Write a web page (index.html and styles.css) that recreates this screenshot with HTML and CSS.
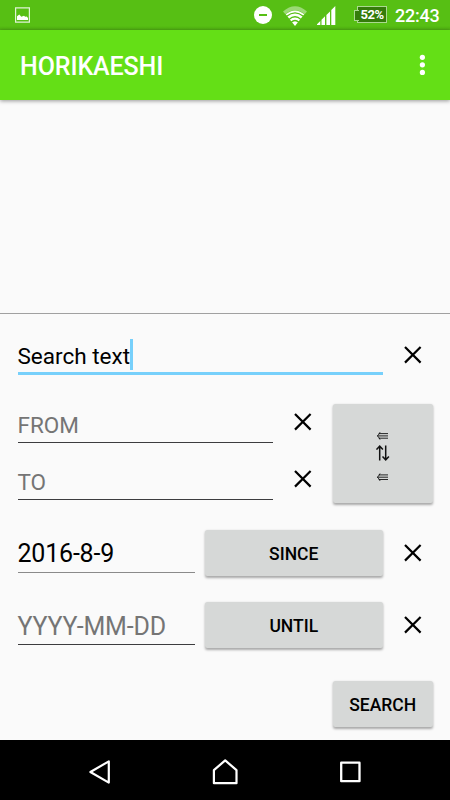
FILE: index.html
```html
<!DOCTYPE html>
<html lang="en">
<head>
<meta charset="utf-8">
<title>HORIKAESHI</title>
<link rel="stylesheet" href="styles.css">
</head>
<body>
<svg class="defs" width="0" height="0"><symbol id="clear" viewBox="0 0 18 18"><path d="M1 1 16.6 16.6M16.6 1 1 16.6" fill="none" stroke="#000" stroke-width="2.2"/></symbol></svg>
<header class="status">
  <svg class="picture" width="15" height="16" viewBox="0 0 15 16"><path d="M.6.8h13.8v14.4H.6z" fill="none" stroke="#e0f4d5" stroke-width="1.2"/><path d="M2 13V9.3L4.3 7.5l2 2.3L9 8.8l1.2.9 1.5-.3L13 11v2z" fill="#fff"/></svg>
  <svg class="dnd" width="18" height="18" viewBox="0 0 18 18"><circle cx="9" cy="9" r="9" fill="#fff"/><path d="M5 9h8" stroke="#57bf14" stroke-width="2"/></svg>
  <svg class="wifi" width="24" height="20" viewBox="0 0 24 20"><path d="M0 5.5Q12-5 24 5.5L21.7 8.3Q12 .2 2.3 8.3z" fill="#9bd975"/><path d="M2.7 8.2Q12 .6 21.3 8.2L12 20z" fill="#fff"/><path d="M3.7 10.3Q12 3.5 20.3 10.3M6 13.4Q12 8.2 18 13.4M8.1 16.2Q12 12.7 15.9 16.2" fill="none" stroke="#57bf14" stroke-width="1.3"/></svg>
  <svg class="signal" width="19" height="19" viewBox="0 0 19 19"><path d="M0 19v-.8L3.3 15v4zM4.5 19v-5.2L8 10.3V19zM9.4 19V9L13 5.4V19zM14.3 19V4.1L18.3 0v19z" fill="#fff"/></svg>
  <div class="battery">52%</div>
  <div class="clock">22:43</div>
</header>
<div class="appbar">
  <h1>HORIKAESHI</h1>
  <svg width="6" height="22" viewBox="0 0 6 22"><g fill="#fff"><circle cx="3.4" cy="3.3" r="2.6"/><circle cx="3.4" cy="10.8" r="2.6"/><circle cx="3.4" cy="18.4" r="2.6"/></g></svg>
</div>
<main class="results"></main>
<section class="form">
  <div class="row query">
    <div class="field focused"><span>Search text</span><i class="caret"></i></div>
    <svg class="x"><use href="#clear"/></svg>
  </div>
  <div class="row langs">
    <div class="lines">
      <div class="row from"><div class="field hint">FROM</div><svg class="x"><use href="#clear"/></svg></div>
      <div class="row to"><div class="field hint">TO</div><svg class="x"><use href="#clear"/></svg></div>
    </div>
    <div class="button swap">
      <svg width="14" height="52" viewBox="0 0 14 52"><g fill="none" stroke="#111"><path id="left" d="M2.7 2.6H12M1.5 4.9H12M2.7 7.2H12M4 1.2Q3.5 3.5 1.2 4.9 3.5 6.3 4 8.6" stroke-width=".9"/><path d="M3.7 29.5V15M.5 18.6 3.7 15.2 6.9 18.6M9.7 14.5V29M6.5 25.4 9.7 28.8 12.9 25.4" stroke-width="1.5"/><use href="#left" y="41.3"/></g></svg>
    </div>
  </div>
  <div class="row date since"><div class="field">2016-8-9</div><div class="button">SINCE</div><svg class="x"><use href="#clear"/></svg></div>
  <div class="row date until"><div class="field hint">YYYY-MM-DD</div><div class="button">UNTIL</div><svg class="x"><use href="#clear"/></svg></div>
  <div class="button search">SEARCH</div>
</section>
<nav class="nav">
  <svg width="22" height="24" viewBox="0 0 22 24"><path d="M1.4 12 19.8 1.4V22.6z" fill="none" stroke="#fff" stroke-width="2.2" stroke-linejoin="round"/></svg>
  <svg width="26" height="26" viewBox="0 0 26 26"><path d="M1.9 11.1 13.2 1.4 24.5 11.1V24.2H1.9z" fill="none" stroke="#fff" stroke-width="2.2" stroke-linejoin="round"/></svg>
  <svg width="22" height="22" viewBox="0 0 22 22"><path d="M2.2 1.7H20.5V20.2H2.2z" fill="none" stroke="#fff" stroke-width="2.3" stroke-linejoin="round"/></svg>
</nav>
</body>
</html>
```
FILE: styles.css
```css
* { box-sizing: border-box; }
body {
  margin: 0;
  width: 450px;
  height: 800px;
  display: flex;
  flex-direction: column;
  overflow: hidden;
  background: #fafafa;
  color: #000;
  font-family: Roboto, "Liberation Sans", sans-serif;
}
svg { display: block; flex: none; }
.defs { display: none; }

.status {
  flex: none;
  height: 30px;
  display: flex;
  align-items: flex-start;
  padding: 0 10.5px 0 15px;
  background: linear-gradient(#57bf14 26px, #4fae12 30px);
  color: #fff;
}
.picture { margin-top: 7px; }
.dnd { margin: 6px 0 0 auto; }
.wifi { margin: 6px 0 0 11px; }
.signal { margin: 6px 0 0 10px; }
.battery {
  position: relative;
  width: 30px;
  height: 17px;
  margin: 6px 0 0 21px;
  border: 1px solid #abd991;
  background: #357c0b;
  font-size: 13px;
  font-weight: 700;
  letter-spacing: -.5px;
  line-height: 16px;
  display: flex;
  justify-content: center;
}
.battery::before {
  content: "";
  position: absolute;
  left: -4px;
  top: 3px;
  width: 4px;
  height: 9px;
  border: 1px solid #abd991;
  border-right: 0;
  background: #357c0b;
}
.clock {
  width: 44.5px;
  margin-left: 8px;
  font-size: 18px;
  letter-spacing: -.25px;
  font-weight: 500;
  line-height: 32px;
  display: flex;
  justify-content: flex-end;
}

.appbar {
  flex: none;
  height: 70px;
  display: flex;
  align-items: center;
  justify-content: space-between;
  padding: 0 25px 0 20px;
  background: #64df16;
  box-shadow: 0 1px 4px rgba(0, 0, 0, .4);
  color: #fff;
}
.appbar h1 {
  margin: 4px 0 0;
  font-size: 25px;
  letter-spacing: -.1px;
  font-weight: 500;
  line-height: 30px;
}

.results { flex: 1; border-bottom: 1px solid #a0a0a0; }

.form {
  flex: none;
  height: 426px;
  padding: 17px 17px 0 17.5px;
  display: flex;
  flex-direction: column;
}
.row { display: flex; }
.x { width: 18px; height: 18px; }
.field {
  display: flex;
  align-items: center;
  border-bottom: 1px solid #3c3c3e;
  font-size: 22.5px;
}
.hint { color: #757575; }

.query { height: 44px; }
.query .field { width: 365px; border-bottom: 3px solid #77d0fb; padding-top: 9px; }
.query .x { margin: 15px 0 0 21px; }
.caret { width: 3px; height: 31px; margin: -4px 0 0 -.5px; background: #77d0fb; }

.langs { margin-top: 28.5px; height: 99px; justify-content: space-between; }
.lines .field { width: 255px; }
.lines .row { height: 39px; }
.lines .row .field { padding-top: 4px; }
.lines .to { margin-top: 18px; }
.lines .x { margin: 9px 0 0 21px; }

.button {
  display: flex;
  align-items: center;
  justify-content: center;
  height: 46px;
  padding-top: 2px;
  border-radius: 2.5px;
  background: #d6d8d7;
  box-shadow: 0 1.5px 2.5px rgba(0, 0, 0, .33);
  font-size: 17.5px;
  font-weight: 500;
  line-height: 20px;
}
.swap { width: 100.5px; height: 99px; padding-top: 8px; }

.date { height: 46px; }
.since { margin-top: 27px; }
.until { margin-top: 26.5px; }
.date .field { width: 177.5px; height: 43px; font-size: 25px; letter-spacing: -.2px; padding-top: 6px; }
.since .field { border-color: #8a8a8a; }
.date .button { width: 177.5px; margin-left: 10px; }
.date .x { margin: 14px 0 0 21px; }

.search { width: 100.5px; margin: 32.5px 0 0 auto; }

.nav {
  flex: none;
  height: 60px;
  display: flex;
  justify-content: space-between;
  align-items: center;
  padding: 4px 89px 0 89px;
  background: #000;
}
```
